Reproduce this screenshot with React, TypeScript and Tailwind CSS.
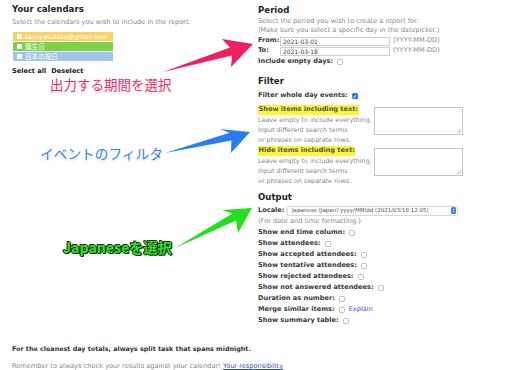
import React from 'react';

const labelCls = "font-bold text-[#3a3a3a] whitespace-nowrap";
const grayCls = "text-[#888] whitespace-nowrap";

function Box({ checked = false }: { checked?: boolean }) {
  if (checked) {
    return (
      <span className="inline-flex shrink-0 items-center justify-center w-[6px] h-[6px] rounded-[1.5px] bg-[#2d74de] ml-[4px]">
        <svg width="5" height="5" viewBox="0 0 10 10">
          <path d="M2 5.2 L4.2 7.4 L8.2 2.6" stroke="#fff" strokeWidth="1.8" fill="none" />
        </svg>
      </span>
    );
  }
  return <span className="inline-block shrink-0 w-[6px] h-[6px] rounded-[1.5px] border-[0.7px] border-[#bdbdbd] bg-white ml-[4px]" />;
}

function OptRow({ label, extra }: { label: string; extra?: React.ReactNode }) {
  return (
    <div className="h-[11px] flex items-center">
      <span className={labelCls}>{label}</span>
      <Box />
      {extra}
    </div>
  );
}

function Grip() {
  return (
    <svg className="absolute right-[1px] bottom-[1px]" width="5" height="5" viewBox="0 0 5 5">
      <path d="M1 5 L5 1 M3 5 L5 3" stroke="#999" strokeWidth="0.6" />
    </svg>
  );
}

function TextBlock({ title }: { title: string }) {
  return (
    <div className="flex">
      <div className="w-[116px] shrink-0">
        <div className="h-[10px] flex items-center">
          <span className="bg-[#f9f53a] font-bold text-[#555] px-[0.5px] whitespace-nowrap">{title}</span>
        </div>
        <div className={`h-[10px] leading-[10px] text-[6.4px] ${grayCls}`}>Leave empty to include everything.</div>
        <div className={`h-[10px] leading-[10px] text-[6.4px] ${grayCls}`}>Input different search terms</div>
        <div className={`h-[10px] leading-[10px] text-[6.4px] ${grayCls}`}>or phrases on separate rows.</div>
      </div>
      <div className="relative shrink-0 w-[89px] h-[28px] mt-[1.5px] border-[0.7px] border-[#c4c4c4] bg-white">
        <Grip />
      </div>
    </div>
  );
}

function DateRow({ label, value }: { label: string; value: string }) {
  return (
    <div className="h-[10px] flex items-center">
      <span className={`${labelCls} w-[22px] shrink-0`}>{label}</span>
      <div className="w-[110px] shrink-0 h-[9px] border-[0.7px] border-[#cfcfcf] bg-white flex items-center pl-[2px] text-[6px] text-[#444]">
        {value}
      </div>
      <span className={`${grayCls} ml-[3px]`}>(YYYY-MM-DD)</span>
    </div>
  );
}

export default function App() {
  return (
    <div className="relative w-[512px] h-[370px] overflow-hidden bg-white text-[6.6px] text-[#333] font-['DejaVu_Sans',Verdana,sans-serif]">
      <div className="pl-[12px]">
        <div className="flex">
          {/* calendars */}
          <div className="w-[246px] shrink-0">
            <div className="mt-[3px] h-[12px] leading-[12px] text-[8.6px] font-bold text-[#1e1e1e]">Your calendars</div>
            <div className={`mt-[3px] h-[9px] leading-[9px] ${grayCls}`}>Select the calendars you wish to include in the report:</div>
            <div className="mt-[5px] w-[100px] ml-[1px] text-white text-[6.3px]">
              <div className="h-[9px] mb-[1px] bg-[#f8d262] flex items-center pl-[4px]">
                <span className="w-[5px] h-[5px] bg-white rounded-[1px] mr-[3px]" />sasoyasutaka@gmail.com
              </div>
              <div className="h-[9px] mb-[1px] bg-[#7bd148] flex items-center pl-[4px]">
                <span className="w-[5px] h-[5px] bg-white rounded-[1px] mr-[3px]" />
                <span className="font-['Noto_Sans_CJK_JP',sans-serif] text-[6.6px]">誕生日</span>
              </div>
              <div className="h-[9px] bg-[#9fc6e7] flex items-center pl-[4px]">
                <span className="w-[5px] h-[5px] bg-white rounded-[1px] mr-[3px]" />
                <span className="font-['Noto_Sans_CJK_JP',sans-serif] text-[6.6px]">日本の祝日</span>
              </div>
            </div>
            <div className="mt-[6px] h-[10px] flex items-center gap-[5px] font-bold text-[#222]">
              <span>Select all</span>
              <span>Deselect</span>
            </div>
          </div>

          {/* settings */}
          <div className="flex-1 min-w-0">
            <div className="mt-[4px] h-[13px] leading-[13px] text-[8.6px] font-bold text-[#1e1e1e]">Period</div>
            <div className={`h-[9px] leading-[9px] ${grayCls}`}>Select the period you wish to create a report for:</div>
            <div className={`h-[9px] leading-[9px] ${grayCls}`}>(Make sure you select a specific day in the datepicker.)</div>
            <div className="mt-[1px]">
              <DateRow label="From:" value="2021-03-01" />
              <DateRow label="To:" value="2021-03-18" />
            </div>
            <OptRow label="Include empty days:" />

            <div className="mt-[8px] h-[13px] leading-[13px] text-[8.6px] font-bold text-[#1e1e1e]">Filter</div>
            <div className="mt-[3px] h-[10px] flex items-center">
              <span className={labelCls}>Filter whole day events:</span>
              <Box checked />
            </div>
            <div className="mt-[4px]">
              <TextBlock title="Show items including text:" />
            </div>
            <div className="mt-[1px]">
              <TextBlock title="Hide items including text:" />
            </div>

            <div className="mt-[5px] h-[13px] leading-[13px] text-[8.6px] font-bold text-[#1e1e1e]">Output</div>
            <div className="mt-[1px] h-[11px] flex items-center">
              <span className={`${labelCls} w-[29px] shrink-0`}>Locale:</span>
              <div className="w-[171px] shrink-0 h-[10px] border-[0.7px] border-[#d8d8d8] rounded-[2px] bg-white flex items-center justify-between pl-[4px] pr-[1px] text-[5.5px] text-[#555]">
                <span className="whitespace-nowrap">Japanese (Japan) yyyy/MM/dd (2021/03/18 12:05)</span>
                <span className="w-[5px] h-[7px] rounded-[1.5px] bg-[#3b82f0] flex items-center justify-center">
                  <svg width="3" height="5" viewBox="0 0 6 10">
                    <path d="M1 4 L3 1.5 L5 4 Z M1 6 L3 8.5 L5 6 Z" fill="#fff" />
                  </svg>
                </span>
              </div>
            </div>
            <div className={`h-[10px] leading-[10px] ${grayCls}`}>(For date and time formatting.)</div>
            <div className="mt-[1px]">
              <OptRow label="Show end time column:" />
              <OptRow label="Show attendees:" />
              <OptRow label="Show accepted attendees:" />
              <OptRow label="Show tentative attendees:" />
              <OptRow label="Show rejected attendees:" />
              <OptRow label="Show not answered attendees:" />
              <OptRow label="Duration as number:" />
              <OptRow label="Merge similar items:" extra={<span className="ml-[4px] text-[#4a4ad0]">Explain</span>} />
              <OptRow label="Show summary table:" />
            </div>
          </div>
        </div>

        <div className="mt-[18px] h-[10px] leading-[10px] text-[6.4px] font-bold text-[#333] whitespace-nowrap">
          For the cleanest day totals, always split task that spans midnight.
        </div>
        <div className={`mt-[7px] h-[10px] leading-[10px] ${grayCls}`}>
          Remember to always check your results against your calendar!{' '}
          <span className="text-[#3a4fb0] underline">Your responsibility</span>
        </div>
      </div>

      {/* annotation arrows */}
      <svg className="absolute left-0 top-0 pointer-events-none" width="512" height="370" viewBox="0 0 512 370">
        <polygon points="163,72 230,47.5 222,39 253,44 231,67 232,55.5" fill="#f01f5f" />
        <polygon points="165,153 229.6,132.7 220,129 250,132 231,153 231.4,140.5" fill="#2a7cf2" />
        <polygon points="175,248 232.4,213.5 222,210 252,208 238,233 236,220.6" fill="#22e01e" />
      </svg>

      {/* annotation labels */}
      <div className="absolute left-[50px] top-[75px] text-[13.5px] leading-[18px] text-[#ee2a66] font-['Noto_Sans_CJK_JP',sans-serif] [text-shadow:1px_0_0_#fff,-1px_0_0_#fff,0_1px_0_#fff,0_-1px_0_#fff,0_1px_2px_rgba(0,0,0,0.35)]">
        出力する期間を選択
      </div>
      <div className="absolute left-[40px] top-[144px] text-[13.7px] leading-[18px] text-[#2f7ef0] font-['Noto_Sans_CJK_JP',sans-serif] [text-shadow:1px_0_0_#fff,-1px_0_0_#fff,0_1px_0_#fff,0_-1px_0_#fff,0_1px_2px_rgba(0,0,0,0.35)]">
        イベントのフィルタ
      </div>
      <div className="absolute left-[63px] top-[238px] text-[14.2px] leading-[18px] font-bold text-[#39dd30] font-['Noto_Sans_CJK_JP',sans-serif] [text-shadow:1px_0_0_#0b3a08,-1px_0_0_#0b3a08,0_1px_0_#0b3a08,0_-1px_0_#0b3a08,1px_1px_0_#0b3a08,-1px_-1px_0_#0b3a08]">
        Japaneseを選択
      </div>
    </div>
  );
}
